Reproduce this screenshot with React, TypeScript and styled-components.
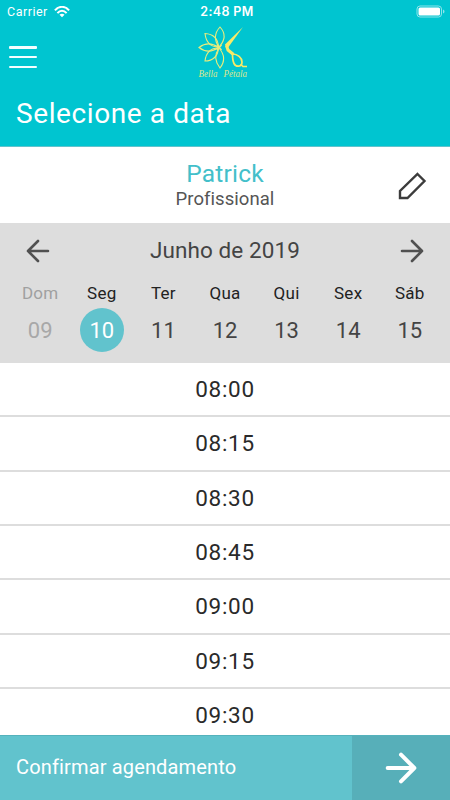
import React from 'react';
import styled, { createGlobalStyle } from 'styled-components';

const GlobalStyle = createGlobalStyle`
  * { box-sizing: border-box; }
  body { margin: 0; background: #fff; font-family: Roboto, "Liberation Sans", sans-serif; }
  button { font: inherit; border: 0; padding: 0; background: none; color: inherit; }
  svg { display: block; }
`;

const Screen = styled.main`
  width: 450px;
  height: 800px;
  display: flex;
  flex-direction: column;
  overflow: hidden;
  background: #fff;
`;

const Header = styled.header`
  height: 147px;
  flex: none;
  background: #00c5d0;
  border-bottom: 1px solid #62c3cc;
  color: #fff;
`;

const StatusBar = styled.div`
  height: 23px;
  display: grid;
  grid-template-columns: 1fr auto 1fr;
  align-items: center;
  padding: 0 3px 0 7px;
`;

const Carrier = styled.div`
  display: flex;
  align-items: center;
  gap: 6px;
  font-size: 12.5px;
  letter-spacing: 0.5px;
`;

const Clock = styled.div`
  font: 600 12.5px Inter, sans-serif;
  letter-spacing: 0.35px;
`;

const Battery = styled.svg`
  justify-self: end;
`;

const NavBar = styled.div`
  height: 67px;
  display: grid;
  grid-template-columns: 1fr 54px 1fr;
  padding: 0 9px;
`;

const MenuButton = styled.button`
  width: 28px;
  height: 22px;
  margin-top: 23px;
  display: flex;
  flex-direction: column;
  justify-content: space-between;
`;

const MenuLine = styled.span`
  width: 28px;
  height: 2.5px;
  border-radius: 1px;
  background: #f4feff;
`;

const Title = styled.h1`
  margin: 6px 0 0 16px;
  font-size: 28px;
  line-height: 36px;
  font-weight: 400;
  letter-spacing: 0.6px;
`;

const Professional = styled.section`
  height: 76px;
  flex: none;
  display: grid;
  grid-template-columns: 60px 1fr 60px;
  align-items: center;
  padding: 1px 8px 0;
  text-align: center;
`;

const Name = styled.div`
  color: #43bfca;
  font-size: 24.5px;
  line-height: 26px;
  letter-spacing: 0.2px;
`;

const Role = styled.div`
  color: #555;
  font-size: 18.5px;
  line-height: 24px;
  letter-spacing: 0.05px;
`;

const EditButton = styled.button`
  justify-self: center;
`;

const Calendar = styled.section`
  height: 140px;
  flex: none;
  background: #ddd;
`;

const MonthBar = styled.div`
  height: 55px;
  display: flex;
  align-items: center;
  justify-content: space-between;
  padding: 0 26px;
`;

const Month = styled.div`
  color: #444;
  font-size: 22.5px;
  letter-spacing: 0.1px;
  padding-bottom: 1px;
`;

const Week = styled.div`
  display: grid;
  grid-template-columns: repeat(7, 61.6px);
  justify-content: center;
`;

const Day = styled.div<{ $past?: boolean }>`
  display: flex;
  flex-direction: column;
  align-items: center;
  color: ${p => (p.$past ? '#a0a0a0' : '#222')};
`;

const Weekday = styled.div`
  height: 30px;
  line-height: 30px;
  font-size: 17px;
  letter-spacing: 0.3px;
`;

const DateCircle = styled.div<{ $selected?: boolean; $past?: boolean }>`
  width: 44px;
  height: 44px;
  border-radius: 50%;
  line-height: 45px;
  text-align: center;
  font-size: 22px;
  background: ${p => (p.$selected ? '#61c3cd' : 'transparent')};
  color: ${p => (p.$selected ? '#fff' : p.$past ? '#a8a8a8' : '#444')};
`;

const Times = styled.section`
  flex: 1;
  min-height: 0;
  overflow: hidden;
`;

const TimeRow = styled.div`
  height: 54.35px;
  border-bottom: 2px solid #ddd;
  line-height: 52px;
  text-align: center;
  font-size: 22.5px;
  letter-spacing: 0.7px;
  color: #2a2a2a;
`;

const Footer = styled.footer`
  height: 65px;
  flex: none;
  display: flex;
  color: #fff;
  background: #61c3cd;
  border-top: 1px solid #55b2bc;
`;

const Confirm = styled.div`
  flex: 1;
  padding-left: 16px;
  line-height: 63px;
  font-size: 20px;
  letter-spacing: 0.15px;
`;

const NextButton = styled.button`
  width: 98px;
  display: grid;
  place-items: center;
  background: #57afb9;
`;

function Wifi() {
  return (
    <svg width="16" height="12" viewBox="0 0 16 12" fill="none" stroke="#fff" strokeWidth="2">
      <path d="M.9 4.4C5-.4 11-.4 15.1 4.4M3.4 7.1c2.8-3 6.4-3 9.2 0" />
      <path d="M8 11.3 5.5 8.8c1.5-1.3 3.5-1.3 5 0Z" fill="#fff" stroke="none" />
    </svg>
  );
}

function Arrow({ size, color, weight, back }: { size: number; color: string; weight: number; back?: boolean }) {
  return (
    <svg width={size} height={size} viewBox="0 0 24 24" fill="none" stroke={color} strokeWidth={weight} strokeLinecap="round" strokeLinejoin="round">
      <path d={back ? 'M22 12H2M12 2 2 12l10 10' : 'M2 12h20M12 2l10 10-10 10'} />
    </svg>
  );
}

function Logo() {
  return (
    <svg width="54" height="60" viewBox="198 23 54 60" overflow="visible" fill="none" stroke="#e9ec7c" strokeWidth="1.1">
      <path d="M219 47C214 40 214.500 33 220 27c5.500 6 5.500 13-1 20Z" />
      <path d="M219 48c-5 7-4.500 13 1 20 5.500-7 5-13-1-20Z" />
      <path d="M218.500 47c-8 0-12.500-5-13.500-13.500 8 .5 13 5 13.500 13.500Z" />
      <path d="M218.500 47.500c-7-5-13-5-19.500 0 6.500 5 12.500 5 19.500 0Z" />
      <path d="M218.500 48c-8 0-12.500 5-13.500 13 8 0 13-5 13.500-13Z" />
      <path d="M217 45l4.500 5M221.500 45l-4.500 5" strokeWidth="1.400" />
      <path d="M243 27 225 44.500l1 3.500 2.500-1L243 27Z" fill="#f9ea67" stroke="none" />
      <path d="m226.500 45.500 1.500 4.500 5.500 4.500" stroke="#f9ea67" strokeWidth="3" />
      <path d="M232.500 54c5 0 9.500 3.500 9.500 8 0 5-6 5.500-8 1.500-1.300-2.600-1.500-6-1.500-9.500ZM240.500 64l2.500 2.500h4" stroke="#f9ea67" strokeWidth="1.700" />
      <g fill="#dfe78e" stroke="none" fontFamily="Liberation Serif, serif" fontStyle="italic" fontSize="11">
        <text x="198.500" y="77" textLength="19" lengthAdjust="spacingAndGlyphs">Bella</text>
        <text x="223.500" y="77" textLength="23.500" lengthAdjust="spacingAndGlyphs">Pétala</text>
      </g>
    </svg>
  );
}

const days = [
  ['Dom', '09'], ['Seg', '10'], ['Ter', '11'], ['Qua', '12'], ['Qui', '13'], ['Sex', '14'], ['Sáb', '15'],
];
const times = ['08:00', '08:15', '08:30', '08:45', '09:00', '09:15', '09:30'];

export default function App() {
  return (
    <Screen>
      <GlobalStyle />
      <Header>
        <StatusBar>
          <Carrier>Carrier <Wifi /></Carrier>
          <Clock>2:48 PM</Clock>
          <Battery width="31" height="14" viewBox="0 0 31 14">
            <rect x="1" y="1" width="24.500" height="11" rx="3" fill="none" stroke="#8ee4ea" />
            <rect x="2.500" y="2.500" width="21.500" height="8" rx="1.500" fill="#fff" />
            <path d="M27 4.500c2 .8 2 3.200 0 4Z" fill="#8ee4ea" />
          </Battery>
        </StatusBar>
        <NavBar>
          <MenuButton aria-label="Menu"><MenuLine /><MenuLine /><MenuLine /></MenuButton>
          <Logo />
        </NavBar>
        <Title>Selecione a data</Title>
      </Header>
      <Professional>
        <span />
        <div>
          <Name>Patrick</Name>
          <Role>Profissional</Role>
        </div>
        <EditButton aria-label="Editar">
          <svg width="30" height="30" viewBox="0 0 30 30" fill="none" stroke="#3c3c3c" strokeWidth="2.400">
            <path d="m20.500 3 7 7L10.500 27H3v-7L20.500 3Z" />
          </svg>
        </EditButton>
      </Professional>
      <Calendar>
        <MonthBar>
          <Arrow size={24} color="#505050" weight={2.6} back />
          <Month>Junho de 2019</Month>
          <Arrow size={24} color="#505050" weight={2.6} />
        </MonthBar>
        <Week>
          {days.map(([name, date], i) => (
            <Day key={date} $past={i === 0}>
              <Weekday>{name}</Weekday>
              <DateCircle $selected={i === 1} $past={i === 0}>{date}</DateCircle>
            </Day>
          ))}
        </Week>
      </Calendar>
      <Times>
        {times.map(time => <TimeRow key={time}>{time}</TimeRow>)}
      </Times>
      <Footer>
        <Confirm>Confirmar agendamento</Confirm>
        <NextButton aria-label="Confirmar">
          <Arrow size={32} color="#fff" weight={3} />
        </NextButton>
      </Footer>
    </Screen>
  );
}
